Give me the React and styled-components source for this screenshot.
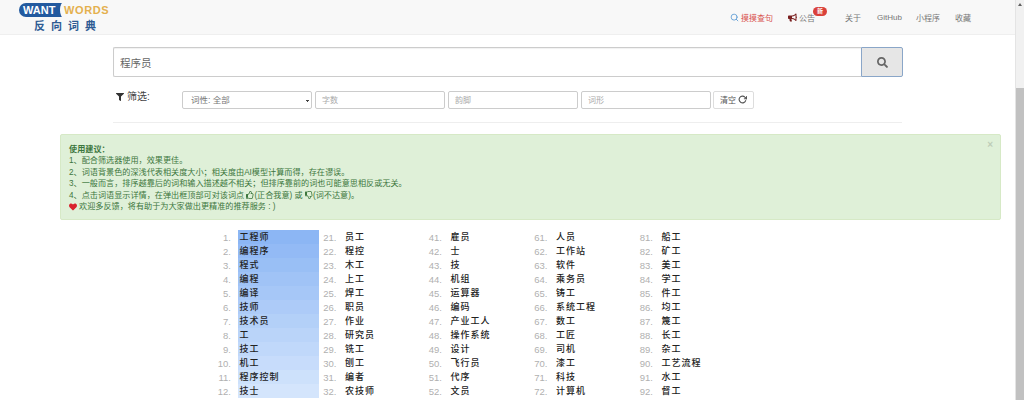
import React from 'react';
import styled, { createGlobalStyle } from 'styled-components';
import { FaSearch, FaFilter, FaHeart, FaBullhorn, FaRegThumbsUp, FaRegThumbsDown } from 'react-icons/fa';
import { FiRotateCw, FiSearch } from 'react-icons/fi';

const CJK = `"Liberation Sans", "Noto Sans CJK SC", sans-serif`;

const Global = createGlobalStyle`
  html, body { margin: 0; padding: 0; height: 400px; overflow: hidden; background: #fff; }
  body { font-family: ${CJK}; }
  * { box-sizing: border-box; }
`;

const Page = styled.div`display: flex; width: 1024px; height: 400px; overflow: hidden;`;
const Main = styled.div`width: 1015px; height: 400px; overflow: hidden; display: flex; flex-direction: column;`;
const ScrollTrack = styled.div`width: 9px; height: 400px; background: #f1f1f1; display: flex; flex-direction: column; align-items: center; border-left: 1px solid #e4e4e4;`;
const ScrollArrow = styled.div`width: 0; height: 0; margin-top: 3px; border-left: 2.5px solid transparent; border-right: 2.5px solid transparent; border-bottom: 3px solid #606060;`;
const ScrollThumb = styled.div`width: 100%; margin-top: 82px; flex: 1; background: #c1c1c1;`;

const Navbar = styled.header`flex: none; height: 35px; background: #f8f8f8; border-bottom: 1px solid #efefef; display: flex; align-items: flex-start; padding-left: 19px;`;
const Logo = styled.div`width: 92px; margin-top: 3px; display: flex; flex-direction: column;`;
const LogoTop = styled.div`display: flex; align-items: center; height: 14px; font-size: 11px; font-weight: 700; line-height: 14px; font-family: "Liberation Sans", sans-serif;`;
const LogoWant = styled.span`
  position: relative; overflow: hidden; flex: none; background: #235a9f; color: #fff; padding-left: 4px; width: 44px; height: 14px; border-radius: 7px 0 0 7px;
  &::after { content: ""; position: absolute; right: -5px; top: -1px; width: 8px; height: 16px; border-radius: 50%; background: #f8f8f8; }
`;
const LogoWords = styled.span`position: relative; color: #e4b04e; margin-left: 1px; letter-spacing: .6px;`;
const LogoCn = styled.div`margin: 3px 0 0 15px; font-size: 11px; line-height: 13px; font-weight: 700; color: #2e5b93; letter-spacing: 6px; white-space: nowrap;`;

const NavItems = styled.nav`margin-left: 619px; display: flex; align-items: center; height: 35px; font-size: 8px; color: #777;`;
const NavItem = styled.span`display: flex; align-items: center; white-space: nowrap; margin-right: ${p => p.$gap}px; color: ${p => p.$color || '#777'}; position: relative;`;
const Badge = styled.span`position: absolute; left: 25px; top: -5px; width: 14px; height: 9px; border-radius: 5px; background: #d9403a; color: #fff; font-size: 6px; font-weight: 700; line-height: 9px; text-align: center;`;

const SearchRow = styled.div`display: flex; width: 790px; height: 30px; margin: 12px 0 0 113px;`;
const SearchInput = styled.input`flex: 1; min-width: 0; height: 30px; border: 1px solid #ccc; border-right: 0; border-radius: 2px 0 0 2px; padding: 0 6px; font: 10.5px ${CJK}; color: #666; background: #fff; outline: none; box-shadow: inset 0 1px 1px rgba(0,0,0,.06);`;
const SearchBtn = styled.button`width: 42px; height: 30px; padding: 0; border: 1px solid #8aa6c8; border-radius: 0 2px 2px 0; background: #e6e6e6; color: #666; display: flex; align-items: center; justify-content: center; font-size: 11px;`;

const FilterRow = styled.div`display: flex; align-items: flex-start; margin: 13px 0 0 116px; height: 20px;`;
const FilterLabel = styled.div`width: 66px; display: flex; align-items: center; gap: 3px; font-size: 10px; line-height: 14px; color: #444; white-space: nowrap;`;
const FilterSelect = styled.select`
  appearance: none; width: 130px; height: 18px; margin-top: 1px; padding: 0 4px 0 8px; border: 1px solid #ccc; border-radius: 2px; color: #777; font: 8.5px ${CJK}; outline: none;
  background-color: #fff;
  background-image: linear-gradient(225deg, #444 50%, transparent 50%), linear-gradient(135deg, #444 50%, transparent 50%);
  background-repeat: no-repeat;
  background-size: 2px 2px, 2px 2px;
  background-position: 123px 8px, 125px 8px;
`;
const FilterInput = styled.input`width: 130px; height: 18px; margin: 1px 0 0 3px; padding: 0 6px; border: 1px solid #ccc; border-radius: 2px; background: #fff; font: 8px ${CJK}; outline: none; &::placeholder { color: #aaa; }`;
const ClearBtn = styled.button`width: 41px; height: 18px; margin: 1px 0 0 2px; padding: 0 0 1px; border: 1px solid #ddd; border-radius: 2px; background: #fff; color: #555; font: 8px ${CJK}; display: flex; align-items: center; justify-content: center; gap: 2px;`;

const Rule = styled.hr`width: 789px; margin: 12px 0 0 113px; border: 0; border-top: 1px solid #eee;`;

const Alert = styled.section`position: relative; flex: none; width: 941px; height: 86px; margin: 11px 0 0 60px; padding: 9px 8px; background: #dff0d8; border: 1px solid #d6e9c6; border-radius: 2px; color: #3c763d; font-size: 8.15px; line-height: 11.4px;`;
const AlertLine = styled.div`display: flex; align-items: center; white-space: nowrap; height: 11.4px;`;
const AlertTitle = styled(AlertLine)`font-weight: 700;`;
const Close = styled.span`position: absolute; right: 7px; top: 4px; font-size: 10px; font-weight: 700; color: #000; opacity: .15;`;

const WordGrid = styled.div`display: grid; grid-template-columns: repeat(5, 105.5px); margin: 10px 0 0 213px;`;
const WordColumn = styled.ol`list-style: none; margin: 0; padding: 0;`;
const Row = styled.li`display: flex; height: 14px; align-items: stretch;`;
const Num = styled.span`width: 18px; padding-top: 1px; text-align: right; font-size: 9.5px; line-height: 13px; color: #b0b0b0;`;
const Word = styled.span`width: 80.5px; margin-left: 7px; padding: 1px 0 0 1.5px; font-size: 9px; line-height: 13px; letter-spacing: 1px; font-weight: 500; color: #222; white-space: nowrap; background: ${p => p.$bg || 'transparent'};`;

const columns = [
  ['工程师','编程序','程式','编程','编译','技师','技术员','工','技工','机工','程序控制','技士'],
  ['员工','程控','木工','上工','焊工','职员','作业','研究员','铣工','刨工','编者','农技师'],
  ['雇员','士','技','机组','运算器','编码','产业工人','操作系统','设计','飞行员','代序','文员'],
  ['人员','工作站','软件','乘务员','铸工','系统工程','数工','工匠','司机','漆工','科技','计算机'],
  ['船工','矿工','美工','学工','件工','均工','篾工','长工','杂工','工艺流程','水工','督工'],
];
const starts = [1, 21, 41, 61, 81];

const rowColor = i => {
  const t = i / 11;
  const mix = (a, b) => Math.round(a + (b - a) * t);
  return `rgb(${mix(140, 212)},${mix(182, 229)},${mix(244, 252)})`;
};

export default function App() {
  return (
    <Page>
      <Global />
      <Main>
        <Navbar>
          <Logo>
            <LogoTop><LogoWant>WANT</LogoWant><LogoWords>WORDS</LogoWords></LogoTop>
            <LogoCn>反向词典</LogoCn>
          </Logo>
          <NavItems>
            <NavItem $gap={15} $color="#d9534f"><FiSearch size={9} color="#4a90d0" style={{ marginRight: 2 }} />摸摸查句</NavItem>
            <NavItem $gap={30}><FaBullhorn size={9} color="#7a2020" style={{ marginRight: 2 }} />公告<Badge>新</Badge></NavItem>
            <NavItem $gap={16}>关于</NavItem>
            <NavItem $gap={14}>GitHub</NavItem>
            <NavItem $gap={15}>小程序</NavItem>
            <NavItem $gap={0}>收藏</NavItem>
          </NavItems>
        </Navbar>

        <SearchRow>
          <SearchInput defaultValue="程序员" />
          <SearchBtn aria-label="search"><FaSearch /></SearchBtn>
        </SearchRow>

        <FilterRow>
          <FilterLabel><FaFilter size={8} color="#333" />筛选:</FilterLabel>
          <FilterSelect defaultValue="all"><option value="all">词性: 全部</option></FilterSelect>
          <FilterInput placeholder="字数" />
          <FilterInput placeholder="韵脚" />
          <FilterInput placeholder="词形" />
          <ClearBtn>清空<FiRotateCw size={9} strokeWidth={3} /></ClearBtn>
        </FilterRow>

        <Rule />

        <Alert>
          <Close>×</Close>
          <AlertTitle>使用建议&#xFF1A;</AlertTitle>
          <AlertLine>1、配合筛选器使用&#xFF0C;效果更佳。</AlertLine>
          <AlertLine>2、词语背景色的深浅代表相关度大小&#xFF1B;相关度由AI模型计算而得&#xFF0C;存在谬误。</AlertLine>
          <AlertLine>3、一般而言&#xFF0C;排序越靠后的词和输入描述越不相关&#xFF1B;但排序靠前的词也可能意思相反或无关。</AlertLine>
          <AlertLine>4、点击词语显示详情&#xFF0C;在弹出框顶部可对该词点&nbsp;<FaRegThumbsUp size={8} />(正合我意) 或&nbsp;<FaRegThumbsDown size={8} />(词不达意)。</AlertLine>
          <AlertLine><FaHeart size={8} color="#d9232e" style={{ marginRight: 2 }} />欢迎多反馈&#xFF0C;将有助于为大家做出更精准的推荐服务 : )</AlertLine>
        </Alert>

        <WordGrid>
          {columns.map((words, c) => (
            <WordColumn key={c}>
              {words.map((w, i) => (
                <Row key={w}>
                  <Num>{starts[c] + i}.</Num>
                  <Word $bg={c === 0 ? rowColor(i) : undefined}>{w}</Word>
                </Row>
              ))}
            </WordColumn>
          ))}
        </WordGrid>
      </Main>
      <ScrollTrack>
        <ScrollArrow />
        <ScrollThumb />
      </ScrollTrack>
    </Page>
  );
}
